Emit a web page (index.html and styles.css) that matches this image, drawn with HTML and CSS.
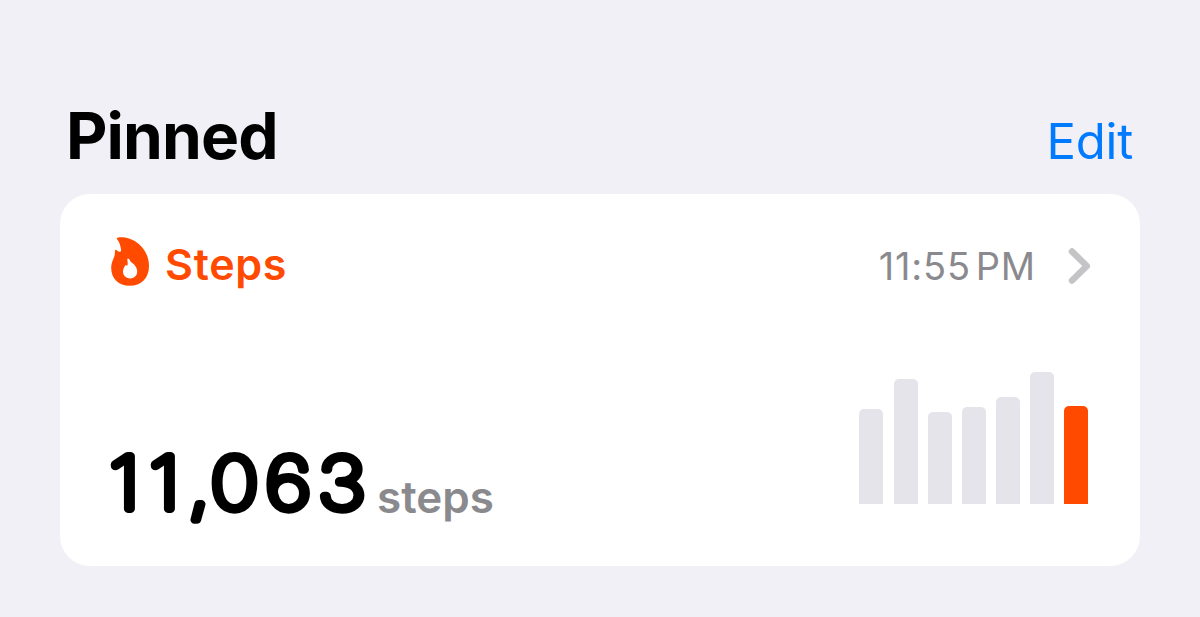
FILE: index.html
```html
<!DOCTYPE html>
<html lang="en">
<head>
    <meta charset="UTF-8">
    <meta name="viewport" content="width=device-width, initial-scale=1.0">
    <title>Pinned</title>
    <link rel="stylesheet" href="styles.css">
</head>
<body>

    <div class="header">
        <h1>Pinned</h1>
        <a class="edit">Edit</a>
    </div>

    <div class="card">
        <div class="card-top">
            <svg class="flame" width="40" height="50" viewBox="0 0 40 50">
                <path fill="#ff4a00" fill-rule="evenodd" d="M7.5 0.8C10 0 15 0.3 19 1.5C30 5 39 15.5 39 29C39 41.5 31 48.8 19.8 48.8C8.5 48.8 1.2 41.5 1.2 31C1.2 25.5 3.6 22 4.6 18.5C5 16.2 4.7 14.5 5.2 13.2C5.6 12.4 6.4 12.7 7.1 13.4C8.2 14.4 8.8 14.8 9.8 14.8C11 14.4 11.3 13.4 11 12C10.4 8 9 4.5 7.3 2.4C6.6 1.6 6.7 1 7.5 0.8ZM18 21.4C18.8 21.4 20.2 23 20.8 25C24.3 27 27.2 30.5 27.2 34.5C27.2 38.8 24 41.4 20.2 41.4C16.2 41.4 13 38.8 13 34.5C13 32 14.3 30.2 15.2 28.6C15.7 27.7 16.3 28 17 29C18.2 27.6 17.6 25 17.3 22.4C17.2 21.8 17.5 21.4 18 21.4Z"/>
            </svg>
            <span class="title">Steps</span>
            <span class="time">11:55<span class="pm">PM</span></span>
            <svg class="chevron" width="24" height="38" viewBox="0 0 24 38">
                <path d="M4 4.5L18.8 19L4 33.5" fill="none" stroke="#c4c4c7" stroke-width="6.5" stroke-linecap="round" stroke-linejoin="round"/>
            </svg>
        </div>

        <div class="card-bottom">
            <div class="value">
                <svg class="number" width="262" height="90">
                    <text transform="scale(1.14 1)" x="-0.5 34.6 68.7 88 136 182.5" y="72">11,063</text>
                </svg>
                <span class="unit">steps</span>
            </div>
            <div class="chart">
                <div class="bar" style="height: 95px"></div>
                <div class="bar" style="height: 125px"></div>
                <div class="bar" style="height: 92px"></div>
                <div class="bar" style="height: 97px"></div>
                <div class="bar" style="height: 107px"></div>
                <div class="bar" style="height: 132px"></div>
                <div class="bar today" style="height: 98px"></div>
            </div>
        </div>
    </div>

</body>
</html>
```

FILE: styles.css
```css
* {
    box-sizing: border-box;
}

body {
    margin: 0;
    height: 617px;
    padding: 96px 60px 0;
    background-color: #f1f0f6;
    font-family: Inter, sans-serif;
    overflow: hidden;
}

.header {
    display: flex;
    justify-content: space-between;
    align-items: baseline;
    height: 98px;
    padding: 0 7px 0 6px;
}

h1 {
    margin: 0;
    font-size: 64px;
    line-height: 80px;
    font-weight: 700;
    letter-spacing: -0.9px;
    color: #000;
}

.edit {
    font-size: 49px;
    letter-spacing: -0.2px;
    color: #007aff;
}

.card {
    display: flex;
    flex-direction: column;
    justify-content: space-between;
    height: 372px;
    padding: 42px 52px 0 50px;
    background-color: #fff;
    border-radius: 30px;
}

.card-top {
    display: flex;
    align-items: center;
    height: 56px;
}

.flame {
    margin-top: -4px;
}

.title {
    margin-left: 15px;
    font-size: 43px;
    font-weight: 600;
    letter-spacing: 0.7px;
    color: #ff4a00;
}

.time {
    margin-left: auto;
    margin-top: 4px;
    font-size: 38px;
    letter-spacing: 0.8px;
    color: #8a8a8e;
}

.pm {
    margin-left: 5px;
}

.chevron {
    margin-left: 32px;
    margin-right: -4px;
    margin-top: 4px;
}

.card-bottom {
    display: flex;
    justify-content: space-between;
    height: 194px;
}

.value {
    display: flex;
    margin-top: 65px;
}

.number {
    display: block;
    overflow: visible;
}

.number text {
    font-size: 72px;
    font-weight: 100;
    fill: #000;
    stroke: #000;
    stroke-width: 8px;
    stroke-linejoin: round;
}

.unit {
    margin-left: 5px;
    margin-top: 33px;
    font-size: 44px;
    line-height: 54px;
    font-weight: 600;
    color: #8a8a8e;
}

.chart {
    display: flex;
    align-items: flex-end;
    gap: 10.1px;
    height: 131.5px;
}

.bar {
    width: 24px;
    background-color: #e5e4eb;
    border-radius: 5px 5px 0 0;
}

.bar.today {
    background-color: #ff4a00;
}
```
